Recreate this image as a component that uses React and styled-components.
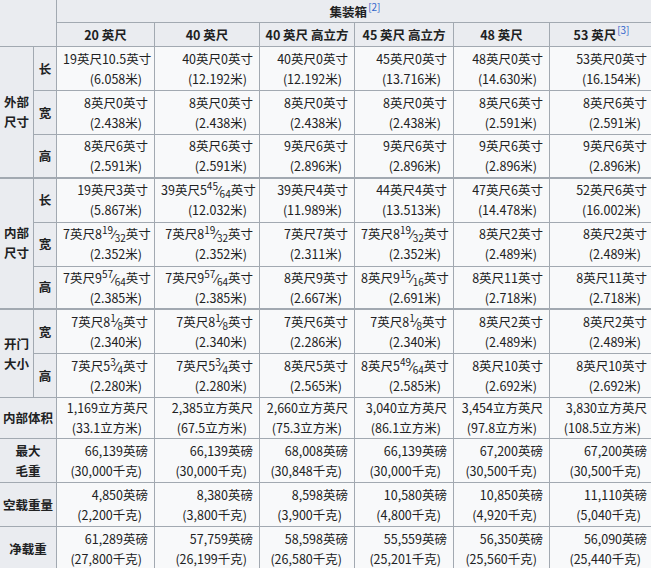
import React, { Fragment } from 'react';
import styled, { createGlobalStyle } from 'styled-components';

const GlobalStyle = createGlobalStyle`
  html, body {
    margin: 0;
    padding: 0;
    background: #ffffff;
    overflow: hidden;
  }
  body {
    font-family: "Noto Sans CJK SC", "Noto Sans", sans-serif;
    color: #202122;
    font-size: 12.5px;
  }
`;

const Table = styled.table`
  border-collapse: collapse;
  table-layout: fixed;
  width: 654px;
  margin: -1px 0 0 -1px;
  background: #f8f9fa;
  color: #202122;
  font-size: 12.5px;
`;

const Col = styled.col`
  width: ${p => p.w}px;
`;

const Row = styled.tr``;

const Th = styled.th`
  background: #eaecf0;
  border: 1px solid #a2a9b1;
  border-bottom-width: ${p => (p.thick ? 2 : 1)}px;
  font-weight: bold;
  text-align: center;
  vertical-align: ${p => (p.bottom ? 'bottom' : 'middle')};
  padding: 0 2px;
  line-height: 20px;
  height: ${p => p.h || 'auto'};
  white-space: nowrap;
`;

const pad = p => {
  if (p.short) return '0 6px';
  if (p.thick) return '1px 6px 0.5px';
  return '1.5px 6px';
};

const Td = styled.td`
  border: 1px solid #a2a9b1;
  border-bottom-width: ${p => (p.thick ? 2 : 1)}px;
  text-align: right;
  padding: ${pad};
  line-height: 20px;
  height: 40px;
  white-space: nowrap;
`;

const Line = styled.div`
  margin-right: ${p => (p.second ? 6 : 0)}px;
`;

const Ref = styled.sup`
  font-size: 10px;
  font-weight: normal;
  color: #3366cc;
  vertical-align: 6px;
  line-height: 0;
  margin-left: 1px;
`;

const FracWrap = styled.span`
  white-space: nowrap;
`;

const Num = styled.sup`
  font-size: 10px;
  vertical-align: 5px;
  line-height: 0;
`;

const Den = styled.sub`
  font-size: 10px;
  vertical-align: -3px;
  line-height: 0;
`;

const Frac = ({ n, d }) => (
  <FracWrap>
    <Num>{n}</Num>⁄<Den>{d}</Den>
  </FracWrap>
);

// feet + inches, with an optional fraction of an inch
const ft = (f, i, n, d) => (
  <>
    {f}英尺{i}
    {n && <Frac n={n} d={d} />}英寸
  </>
);

const heads = [
  '20 英尺',
  '40 英尺',
  '40 英尺 高立方',
  '45 英尺 高立方',
  '48 英尺',
  '53 英尺',
];

const groups = [
  {
    label: ['外部', '尺寸'],
    rows: [
      {
        sub: '长',
        cells: [
          [ft(19, '10.5'), '(6.058米)'],
          [ft(40, 0), '(12.192米)'],
          [ft(40, 0), '(12.192米)'],
          [ft(45, 0), '(13.716米)'],
          [ft(48, 0), '(14.630米)'],
          [ft(53, 0), '(16.154米)'],
        ],
      },
      {
        sub: '宽',
        cells: [
          [ft(8, 0), '(2.438米)'],
          [ft(8, 0), '(2.438米)'],
          [ft(8, 0), '(2.438米)'],
          [ft(8, 0), '(2.438米)'],
          [ft(8, 6), '(2.591米)'],
          [ft(8, 6), '(2.591米)'],
        ],
      },
      {
        sub: '高',
        cells: [
          [ft(8, 6), '(2.591米)'],
          [ft(8, 6), '(2.591米)'],
          [ft(9, 6), '(2.896米)'],
          [ft(9, 6), '(2.896米)'],
          [ft(9, 6), '(2.896米)'],
          [ft(9, 6), '(2.896米)'],
        ],
      },
    ],
  },
  {
    label: ['内部', '尺寸'],
    rows: [
      {
        sub: '长',
        cells: [
          [ft(19, 3), '(5.867米)'],
          [ft(39, 5, 45, 64), '(12.032米)'],
          [ft(39, 4), '(11.989米)'],
          [ft(44, 4), '(13.513米)'],
          [ft(47, 6), '(14.478米)'],
          [ft(52, 6), '(16.002米)'],
        ],
      },
      {
        sub: '宽',
        cells: [
          [ft(7, 8, 19, 32), '(2.352米)'],
          [ft(7, 8, 19, 32), '(2.352米)'],
          [ft(7, 7), '(2.311米)'],
          [ft(7, 8, 19, 32), '(2.352米)'],
          [ft(8, 2), '(2.489米)'],
          [ft(8, 2), '(2.489米)'],
        ],
      },
      {
        sub: '高',
        cells: [
          [ft(7, 9, 57, 64), '(2.385米)'],
          [ft(7, 9, 57, 64), '(2.385米)'],
          [ft(8, 9), '(2.667米)'],
          [ft(8, 9, 15, 16), '(2.691米)'],
          [ft(8, 11), '(2.718米)'],
          [ft(8, 11), '(2.718米)'],
        ],
      },
    ],
  },
  {
    label: ['开门', '大小'],
    rows: [
      {
        sub: '宽',
        cells: [
          [ft(7, 8, 1, 8), '(2.340米)'],
          [ft(7, 8, 1, 8), '(2.340米)'],
          [ft(7, 6), '(2.286米)'],
          [ft(7, 8, 1, 8), '(2.340米)'],
          [ft(8, 2), '(2.489米)'],
          [ft(8, 2), '(2.489米)'],
        ],
      },
      {
        sub: '高',
        cells: [
          [ft(7, 5, 3, 4), '(2.280米)'],
          [ft(7, 5, 3, 4), '(2.280米)'],
          [ft(8, 5), '(2.565米)'],
          [ft(8, 5, 49, 64), '(2.585米)'],
          [ft(8, 10), '(2.692米)'],
          [ft(8, 10), '(2.692米)'],
        ],
      },
    ],
  },
];

const singles = [
  {
    label: ['内部体积'],
    short: true,
    cells: [
      ['1,169立方英尺', '(33.1立方米)'],
      ['2,385立方英尺', '(67.5立方米)'],
      ['2,660立方英尺', '(75.3立方米)'],
      ['3,040立方英尺', '(86.1立方米)'],
      ['3,454立方英尺', '(97.8立方米)'],
      ['3,830立方英尺', '(108.5立方米)'],
    ],
  },
  {
    label: ['最大', '毛重'],
    cells: [
      ['66,139英磅', '(30,000千克)'],
      ['66,139英磅', '(30,000千克)'],
      ['68,008英磅', '(30,848千克)'],
      ['66,139英磅', '(30,000千克)'],
      ['67,200英磅', '(30,500千克)'],
      ['67,200英磅', '(30,500千克)'],
    ],
  },
  {
    label: ['空载重量'],
    cells: [
      ['4,850英磅', '(2,200千克)'],
      ['8,380英磅', '(3,800千克)'],
      ['8,598英磅', '(3,900千克)'],
      ['10,580英磅', '(4,800千克)'],
      ['10,850英磅', '(4,920千克)'],
      ['11,110英磅', '(5,040千克)'],
    ],
  },
  {
    label: ['净载重'],
    cells: [
      ['61,289英磅', '(27,800千克)'],
      ['57,759英磅', '(26,199千克)'],
      ['58,598英磅', '(26,580千克)'],
      ['55,559英磅', '(25,201千克)'],
      ['56,350英磅', '(25,560千克)'],
      ['56,090英磅', '(25,440千克)'],
    ],
  },
];

const Cell = ({ v, thick, short }) => (
  <Td thick={thick} short={short}>
    <Line>{v[0]}</Line>
    <Line second>{v[1]}</Line>
  </Td>
);

const Label = ({ lines }) =>
  lines.map((l, i) => <div key={i}>{l}</div>);

const App = () => {
  return (
    <>
      <GlobalStyle />
      <Table>
        <colgroup>
          <Col w={34} />
          <Col w={23} />
          <Col w={98} />
          <Col w={105} />
          <Col w={95} />
          <Col w={99} />
          <Col w={96} />
          <Col w={104} />
        </colgroup>
        <thead>
          <Row>
            <Th rowSpan={2} colSpan={2} />
            <Th colSpan={6} h="22px" bottom>
              集装箱<Ref>[2]</Ref>
            </Th>
          </Row>
          <Row>
            {heads.map((h, i) => (
              <Th key={h} h="23px">
                {h}
                {i === 5 && <Ref>[3]</Ref>}
              </Th>
            ))}
          </Row>
        </thead>
        <tbody>
          {groups.map((g, gi) => (
            <Fragment key={gi}>
              {g.rows.map((r, ri) => {
                const last = ri === g.rows.length - 1;
                const thick = last && gi < 2;
                return (
                  <Row key={ri}>
                    {ri === 0 && (
                      <Th rowSpan={g.rows.length} thick={gi < 2}>
                        <Label lines={g.label} />
                      </Th>
                    )}
                    <Th thick={thick}>{r.sub}</Th>
                    {r.cells.map((c, ci) => (
                      <Cell key={ci} v={c} thick={thick} />
                    ))}
                  </Row>
                );
              })}
            </Fragment>
          ))}
          {singles.map((s, si) => (
            <Row key={si}>
              <Th colSpan={2}>
                <Label lines={s.label} />
              </Th>
              {s.cells.map((c, ci) => (
                <Cell key={ci} v={c} short={s.short} />
              ))}
            </Row>
          ))}
        </tbody>
      </Table>
    </>
  );
};

export default App;
